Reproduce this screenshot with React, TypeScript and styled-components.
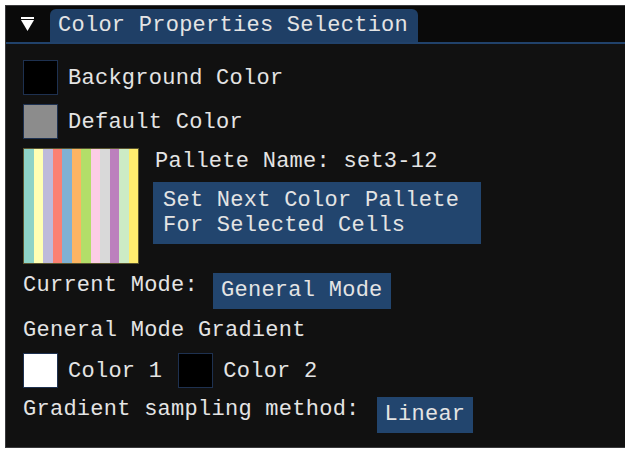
import React, { FC } from "react"
import styled, { createGlobalStyle } from "styled-components"

const colors = {
  page: "#ffffff",
  frame: "#3a3a3c",
  titleBg: "#0a0a0a",
  windowBg: "#111111",
  accent: "#21426b",
  tab: "#1f3f66",
  button: "#22456e",
  swatchBorder: "#1e3150",
  text: "#e4e4e4",
}

const set3 = [
  "#8dd3c7",
  "#ffffb3",
  "#bebada",
  "#fb8072",
  "#80b1d3",
  "#fdb462",
  "#b3de69",
  "#fccde5",
  "#d9d9d9",
  "#bc80bd",
  "#ccebc5",
  "#ffed6f",
]

const GlobalStyle = createGlobalStyle`
  html, body {
    margin: 0;
    padding: 0;
    background: ${colors.page};
    overflow: hidden;
  }
  body {
    font-family: "Liberation Mono", "DejaVu Sans Mono", monospace;
    font-size: 22px;
    letter-spacing: 0.26px;
    color: ${colors.text};
  }
`

const Window = styled.div`
  margin: 5px 0 0 5px;
  width: 640px;
  height: 443px;
  box-sizing: border-box;
  border: 1px solid ${colors.frame};
  border-right: none;
  background: ${colors.windowBg};
  display: flex;
  flex-direction: column;
`

const TitleBar = styled.div`
  height: 36px;
  background: ${colors.titleBg};
  border-bottom: 2px solid ${colors.accent};
  display: flex;
  align-items: flex-end;
`

const Collapse = styled.div`
  width: 44px;
  height: 36px;
  display: flex;
  align-items: center;
  padding-left: 15px;
  box-sizing: border-box;
  svg {
    width: 13px;
    height: 15px;
  }
`

const Tab = styled.div`
  height: 33px;
  padding: 0 10px 0 8px;
  background: ${colors.tab};
  border-radius: 6px 6px 0 0;
  display: flex;
  align-items: center;
  white-space: nowrap;
`

const Content = styled.div`
  padding: 16px 17px;
  display: flex;
  flex-direction: column;
  gap: 9px;
`

const Row = styled.div<{ center?: boolean; spacing?: number }>`
  display: flex;
  align-items: ${({ center }) => (center ? "center" : "flex-start")};
  gap: ${({ spacing }) => spacing ?? 16}px;
`

const Label = styled.span`
  line-height: 26px;
  white-space: nowrap;
`

const Swatch = styled.div<{ fill: string }>`
  width: 35px;
  height: 35px;
  box-sizing: border-box;
  background: ${({ fill }) => fill};
  border: 1px solid ${colors.swatchBorder};
  flex-shrink: 0;
`

const Pair = styled.div`
  display: flex;
  align-items: center;
  gap: 10px;
  ${Label} {
    padding-top: 3px;
  }
`

const Palette = styled.div`
  width: 116px;
  height: 116px;
  display: flex;
  border: 1px solid #5a5530;
  box-sizing: border-box;
  flex-shrink: 0;
`

const Stripe = styled.div<{ fill: string }>`
  flex: 1;
  background: ${({ fill }) => fill};
`

const PaletteInfo = styled.div`
  display: flex;
  flex-direction: column;
  gap: 7px;
  padding-top: 1px;
  ${Label} {
    padding-left: 2px;
  }
`

const Button = styled.div<{ wide?: boolean }>`
  background: ${colors.button};
  white-space: pre;
  line-height: 25px;
  padding: ${({ wide }) => (wide ? "6px 10px" : "5px 8px 6px")};
  width: ${({ wide }) => (wide ? "328px" : "auto")};
  box-sizing: border-box;
`

// collapse arrow: a bar over a down-pointing triangle
const Arrow: FC = () => (
  <svg viewBox="0 0 13 15">
    <rect x="0" y="0" width="13" height="2" fill="#ffffff" />
    <polygon points="0,3 13,3 6.5,14" fill="#ffffff" />
  </svg>
)

const ColorItem: FC<{ fill: string; label: string }> = ({ fill, label }) => (
  <Pair>
    <Swatch fill={fill} />
    <Label>{label}</Label>
  </Pair>
)

export default function App() {
  return (
    <>
      <GlobalStyle />
      <Window>
        <TitleBar>
          <Collapse>
            <Arrow />
          </Collapse>
          <Tab>Color Properties Selection</Tab>
        </TitleBar>
        <Content>
          <ColorItem fill="#000000" label="Background Color" />
          <ColorItem fill="#8c8c8c" label="Default Color" />
          <Row spacing={14}>
            <Palette>
              {set3.map((c) => (
                <Stripe key={c} fill={c} />
              ))}
            </Palette>
            <PaletteInfo>
              <Label>Pallete Name: set3-12</Label>
              <Button wide>{"Set Next Color Pallete\nFor Selected Cells"}</Button>
            </PaletteInfo>
          </Row>
          <Row spacing={15}>
            <Label>Current Mode:</Label>
            <Button>General Mode</Button>
          </Row>
          <Label>General Mode Gradient</Label>
          <Row center spacing={16}>
            <ColorItem fill="#ffffff" label="Color 1" />
            <ColorItem fill="#000000" label="Color 2" />
          </Row>
          <Row spacing={17}>
            <Label>Gradient sampling method:</Label>
            <Button>Linear</Button>
          </Row>
        </Content>
      </Window>
    </>
  )
}
